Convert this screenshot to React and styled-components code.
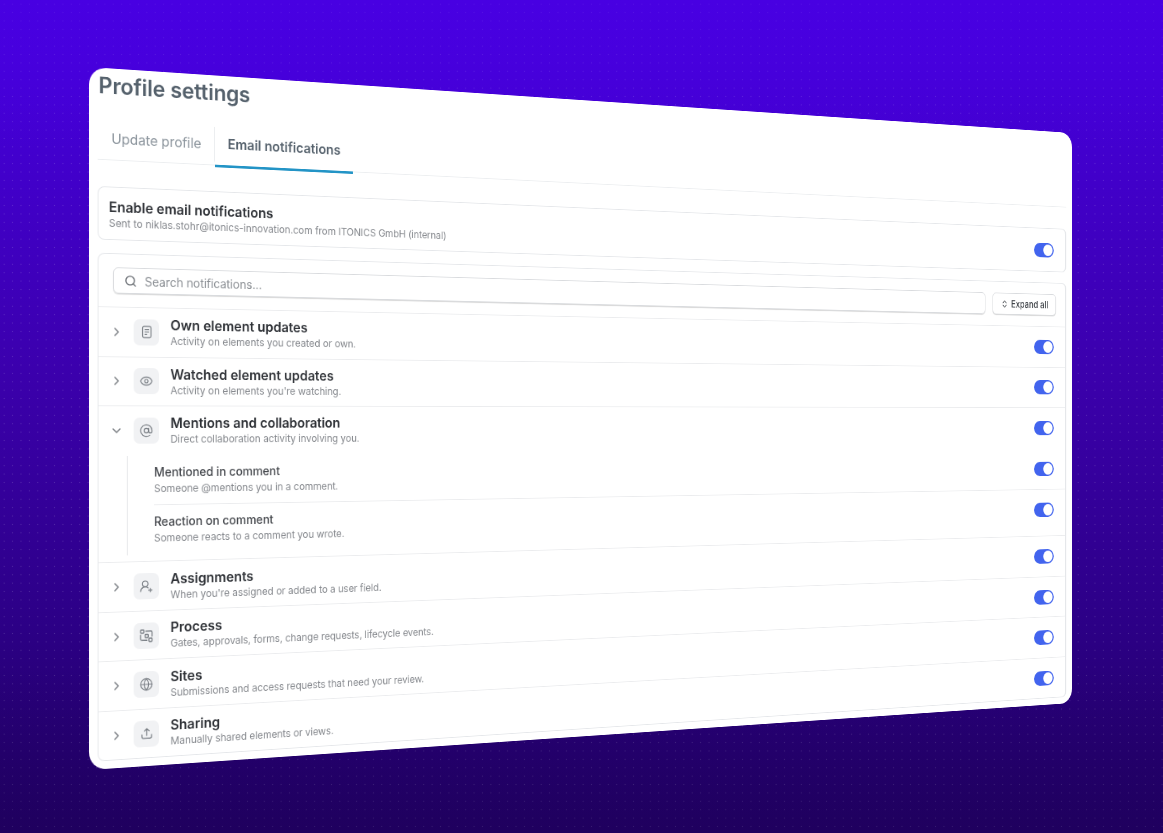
import React from "react";
import styled, { createGlobalStyle } from "styled-components";
import { ChevronRight, ChevronDown, ChevronsUpDown, Search, Eye, AtSign, UserRoundPlus, Globe } from "lucide-react";

const CARD_W = 1400;
const CARD_H = 800;

function quadMatrix(W, H, [x0, y0], [x1, y1], [x2, y2], [x3, y3]) {
  const sx = x0 - x1 + x2 - x3;
  const sy = y0 - y1 + y2 - y3;
  const dx1 = x1 - x2;
  const dx2 = x3 - x2;
  const dy1 = y1 - y2;
  const dy2 = y3 - y2;
  const den = dx1 * dy2 - dx2 * dy1;
  const g = (sx * dy2 - dx2 * sy) / den;
  const h = (dx1 * sy - sx * dy1) / den;
  const a = x1 - x0 + g * x1;
  const b = x3 - x0 + h * x3;
  const d = y1 - y0 + g * y1;
  const e = y3 - y0 + h * y3;
  return [a / W, d / W, 0, g / W, b / H, e / H, 0, h / H, 0, 0, 1, 0, x0, y0, 0, 1].join(",");
}

const tilt = quadMatrix(CARD_W, CARD_H, [89, 67], [1072, 133], [1072, 703], [89, 770]);

const Global = createGlobalStyle`
  html, body { margin: 0; padding: 0; }
  body { font-family: Inter, "Liberation Sans", sans-serif; }
`;

const Stage = styled.div`
  width: 1163px;
  height: 833px;
  overflow: hidden;
  background-color: #3600a8;
  background-image:
    linear-gradient(180deg, rgba(72, 0, 226, 0.6) 0%, rgba(68, 0, 210, 0) 18%, rgba(44, 0, 134, 0) 80%, rgba(31, 0, 94, 0.35) 100%),
    radial-gradient(circle at center, rgba(255, 255, 255, 0.16) 0.6px, transparent 0.95px),
    linear-gradient(180deg, #4800e2 0%, #4200ce 18%, #3b00ac 45%, #2c0086 75%, #1f005e 100%);
  background-size: 100% 100%, 8.4px 8.4px, 100% 100%;
`;

const Card = styled.main`
  width: ${CARD_W}px;
  height: ${CARD_H}px;
  box-sizing: border-box;
  padding: 0 10px;
  background: #fff;
  border-radius: 20px;
  overflow: hidden;
  transform-origin: 0 0;
  transform: matrix3d(${tilt});
  filter: blur(0.72px);
  display: flex;
  flex-direction: column;
`;

const Title = styled.h1`
  margin: 0;
  height: 48px;
  padding-top: 3px;
  padding-left: 1px;
  font-size: 25.2px;
  line-height: 34px;
  font-weight: 600;
  color: #55616c;
  letter-spacing: -0.1px;
`;

const Tabs = styled.nav`
  display: flex;
  height: 54px;
  border-bottom: 1px solid #eceef0;
  margin-bottom: 30px;
  box-sizing: border-box;
`;

const Tab = styled.div`
  height: 56px;
  box-sizing: border-box;
  padding: 3px 16px 0 15px;
  display: flex;
  align-items: center;
  font-size: 16px;
  letter-spacing: -0.08px;
  font-weight: ${(p) => (p.$active ? 600 : 400)};
  color: ${(p) => (p.$active ? "#55616c" : "#8b949c")};
  border-bottom: 3px solid ${(p) => (p.$active ? "#2394c6" : "transparent")};
  &:first-child {
    padding-left: 16px;
    border-right: 1px solid #eceef0;
    height: 42px;
    margin-top: 9px;
    padding-top: 0;
  }
`;

const EnableCard = styled.section`
  height: 61px;
  box-sizing: border-box;
  border: 1px solid #e5e7ea;
  border-right-width: 2px;
  border-radius: 8px;
  padding: 1px 20px 0 12px;
  margin-bottom: 15px;
  display: flex;
  align-items: center;
  justify-content: space-between;
`;

const ListCard = styled.section`
  border: 1px solid #e5e7ea;
  border-right-width: 2px;
  border-radius: 8px;
  flex: 1;
  margin-bottom: 9px;
  overflow: hidden;
`;

const SearchRow = styled.div`
  height: 61px;
  box-sizing: border-box;
  padding: 0 16px 0 17px;
  display: flex;
  align-items: center;
  gap: 12px;
  border-bottom: 1px solid #ebecee;
`;

const SearchBox = styled.div`
  flex: 1;
  height: 30px;
  box-sizing: border-box;
  border: 1px solid #d9dbde;
  border-radius: 6px;
  box-shadow: 0 1px 1px rgba(0, 0, 0, 0.16);
  display: flex;
  align-items: center;
  gap: 9px;
  padding: 0 12px;
  font-size: 14px;
  letter-spacing: -0.1px;
  color: #8b8f94;
  svg { color: #686c72; }
`;

const ExpandButton = styled.button`
  width: 109px;
  height: 30px;
  box-sizing: border-box;
  border: 1px solid #d9dbde;
  border-radius: 6px;
  box-shadow: 0 1px 1px rgba(0, 0, 0, 0.16);
  background: #fff;
  display: flex;
  align-items: center;
  justify-content: center;
  gap: 5px;
  padding: 0;
  font: 500 13px Inter, sans-serif;
  color: #3c4045;
`;

const Row = styled.div`
  height: 56.6px;
  box-sizing: border-box;
  padding: 0 20px 0 13px;
  display: flex;
  align-items: center;
  border-bottom: 1px solid ${(p) => (p.$flat ? "transparent" : "#ebecee")};
`;

const Chevron = styled.span`
  width: 28px;
  display: flex;
  color: #7b7f84;
`;

const IconBox = styled.span`
  width: 30px;
  height: 30px;
  border-radius: 7px;
  background: #f1f2f4;
  color: #7a7f85;
  display: flex;
  align-items: center;
  justify-content: center;
  margin-right: 13.5px;
`;

const Texts = styled.div`
  flex: 1;
  display: flex;
  flex-direction: column;
  gap: 1px;
`;

const RowTitle = styled.div`
  font-size: ${(p) => (p.$sub ? 14 : 16)}px;
  line-height: 20px;
  letter-spacing: -0.04px;
  font-weight: ${(p) => (p.$sub ? 500 : 600)};
  color: ${(p) => (p.$sub ? "#44474c" : "#2e3136")};
`;

const RowSub = styled.div`
  font-size: 12px;
  line-height: 16px;
  letter-spacing: -0.06px;
  color: #85888d;
`;

const Toggle = styled.span`
  width: 34px;
  height: 20px;
  border-radius: 10px;
  background: #4264ee;
  display: flex;
  justify-content: flex-end;
  align-items: center;
  padding: 0 2px;
  box-sizing: border-box;
  flex: none;
  &::after {
    content: "";
    width: 16px;
    height: 16px;
    border-radius: 50%;
    background: #fff;
  }
`;

const SubGroup = styled.div`
  margin-left: 33px;
  margin-bottom: 7.5px;
  border-left: 1px solid #e3e4e7;
`;

const SubRow = styled.div`
  height: 57px;
  margin-left: 31px;
  padding-right: 20px;
  box-sizing: border-box;
  display: flex;
  align-items: center;
  border-bottom: 1px solid ${(p) => (p.$last ? "transparent" : "#ebecee")};
`;

const Expanded = styled.div`
  border-bottom: 1px solid #ebecee;
`;

const icon = { width: 17, height: 17, fill: "none", stroke: "currentColor", strokeWidth: 1.7, strokeLinecap: "round", strokeLinejoin: "round", viewBox: "0 0 24 24" };

const NoteIcon = () => (
  <svg {...icon}>
    <rect x="5" y="3" width="14" height="18" rx="2.5" />
    <path d="M9 8h6M9 12h6M9 16h3" />
  </svg>
);

const ProcessIcon = () => (
  <svg {...icon} width={18} height={18}>
    <rect x="3" y="3" width="5" height="5" rx="1" />
    <rect x="16" y="16" width="5" height="5" rx="1" />
    <rect x="10" y="10" width="5" height="5" rx="1" />
    <path d="M11 5h8a2 2 0 0 1 2 2v6M13 19H5a2 2 0 0 1-2-2v-6" />
  </svg>
);

const ShareIcon = () => (
  <svg {...icon}>
    <path d="M12 15V4M8 8l4-4 4 4" />
    <path d="M4 14v3a3 3 0 0 0 3 3h10a3 3 0 0 0 3-3v-3" />
  </svg>
);

const lucide = { size: 16, strokeWidth: 1.7 };

const rowsAfter = [
  { t: "Assignments", s: "When you're assigned or added to a user field.", i: <UserRoundPlus {...lucide} /> },
  { t: "Process", s: "Gates, approvals, forms, change requests, lifecycle events.", i: <ProcessIcon /> },
  { t: "Sites", s: "Submissions and access requests that need your review.", i: <Globe {...lucide} /> },
  { t: "Sharing", s: "Manually shared elements or views.", i: <ShareIcon /> },
];

function NotificationRow({ t, s, i, open, flat }) {
  const Arrow = open ? ChevronDown : ChevronRight;
  return (
    <Row $flat={flat}>
      <Chevron><Arrow size={16} strokeWidth={2.2} /></Chevron>
      <IconBox>{i}</IconBox>
      <Texts>
        <RowTitle>{t}</RowTitle>
        <RowSub>{s}</RowSub>
      </Texts>
      <Toggle />
    </Row>
  );
}

export default function App() {
  return (
    <Stage>
      <Global />
      <Card>
        <Title>Profile settings</Title>
        <Tabs>
          <Tab>Update profile</Tab>
          <Tab $active>Email notifications</Tab>
        </Tabs>
        <EnableCard>
          <Texts>
            <RowTitle>Enable email notifications</RowTitle>
            <RowSub>Sent to niklas.stohr@itonics-innovation.com from ITONICS GmbH (internal)</RowSub>
          </Texts>
          <Toggle />
        </EnableCard>
        <ListCard>
          <SearchRow>
            <SearchBox><Search size={15} strokeWidth={2.2} />Search notifications...</SearchBox>
            <ExpandButton><ChevronsUpDown size={13} strokeWidth={1.8} />Expand all</ExpandButton>
          </SearchRow>
          <NotificationRow t="Own element updates" s="Activity on elements you created or own." i={<NoteIcon />} />
          <NotificationRow t="Watched element updates" s="Activity on elements you're watching." i={<Eye {...lucide} />} />
          <Expanded>
            <NotificationRow flat open t="Mentions and collaboration" s="Direct collaboration activity involving you." i={<AtSign {...lucide} />} />
            <SubGroup>
              <SubRow>
                <Texts>
                  <RowTitle $sub>Mentioned in comment</RowTitle>
                  <RowSub>Someone @mentions you in a comment.</RowSub>
                </Texts>
                <Toggle />
              </SubRow>
              <SubRow $last>
                <Texts>
                  <RowTitle $sub>Reaction on comment</RowTitle>
                  <RowSub>Someone reacts to a comment you wrote.</RowSub>
                </Texts>
                <Toggle />
              </SubRow>
            </SubGroup>
          </Expanded>
          {rowsAfter.map((r) => (
            <NotificationRow key={r.t} {...r} />
          ))}
        </ListCard>
      </Card>
    </Stage>
  );
}
